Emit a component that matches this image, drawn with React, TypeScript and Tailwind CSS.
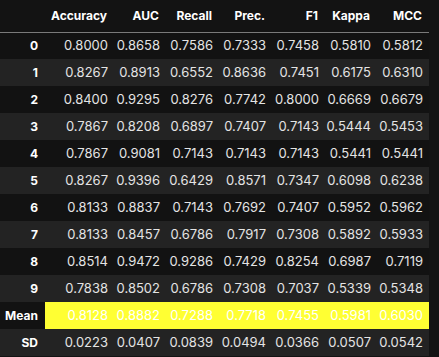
const columns = ['Accuracy', 'AUC', 'Recall', 'Prec.', 'F1', 'Kappa', 'MCC'];

// column widths taken from the screenshot (index column first)
const widths = ['w-[45px]', 'w-[69px]', 'w-[52px]', 'w-[53px]', 'w-[53px]', 'w-[53px]', 'w-[52px]', 'w-[52px]'];

const rows: [string, string[]][] = [
  ['0', ['0.8000', '0.8658', '0.7586', '0.7333', '0.7458', '0.5810', '0.5812']],
  ['1', ['0.8267', '0.8913', '0.6552', '0.8636', '0.7451', '0.6175', '0.6310']],
  ['2', ['0.8400', '0.9295', '0.8276', '0.7742', '0.8000', '0.6669', '0.6679']],
  ['3', ['0.7867', '0.8208', '0.6897', '0.7407', '0.7143', '0.5444', '0.5453']],
  ['4', ['0.7867', '0.9081', '0.7143', '0.7143', '0.7143', '0.5441', '0.5441']],
  ['5', ['0.8267', '0.9396', '0.6429', '0.8571', '0.7347', '0.6098', '0.6238']],
  ['6', ['0.8133', '0.8837', '0.7143', '0.7692', '0.7407', '0.5952', '0.5962']],
  ['7', ['0.8133', '0.8457', '0.6786', '0.7917', '0.7308', '0.5892', '0.5933']],
  ['8', ['0.8514', '0.9472', '0.9286', '0.7429', '0.8254', '0.6987', '0.7119']],
  ['9', ['0.7838', '0.8502', '0.6786', '0.7308', '0.7037', '0.5339', '0.5348']],
  ['Mean', ['0.8128', '0.8882', '0.7288', '0.7718', '0.7455', '0.5981', '0.6030']],
  ['SD', ['0.0223', '0.0407', '0.0839', '0.0494', '0.0366', '0.0507', '0.0542']],
];

function App() {
  return (
    <div className="w-[439px] h-[357px] bg-[#131313] overflow-hidden font-['Inter','Liberation_Sans',sans-serif] text-[12px]">
      <table className="border-collapse table-fixed w-[429px]">
        <thead>
          <tr className="h-[32px] border-b border-[#7a7a7a]">
            <th className={`${widths[0]} p-0`}></th>
            {columns.map((c, i) => (
              <th key={c} className={`${widths[i + 1]} pr-[7px] text-right font-bold text-white`}>
                {c}
              </th>
            ))}
          </tr>
        </thead>
        <tbody>
          {rows.map(([idx, vals], r) => {
            const isMean = idx === 'Mean';
            const stripe = r % 2 === 1 ? 'bg-[#232323]' : 'bg-[#121212]';
            return (
              <tr key={idx} className={`h-[27px] ${stripe}`}>
                <th className={`pr-[7px] text-right font-bold text-white ${isMean ? 'bg-[#121212]' : ''}`}>{idx}</th>
                {vals.map((v, i) => (
                  <td
                    key={i}
                    className={`pr-[6px] text-right text-[13px] ${isMean ? 'bg-[#ffff33] text-white' : 'text-[#e4e4e4]'}`}
                  >
                    {v}
                  </td>
                ))}
              </tr>
            );
          })}
        </tbody>
      </table>
    </div>
  );
}

export default App;
